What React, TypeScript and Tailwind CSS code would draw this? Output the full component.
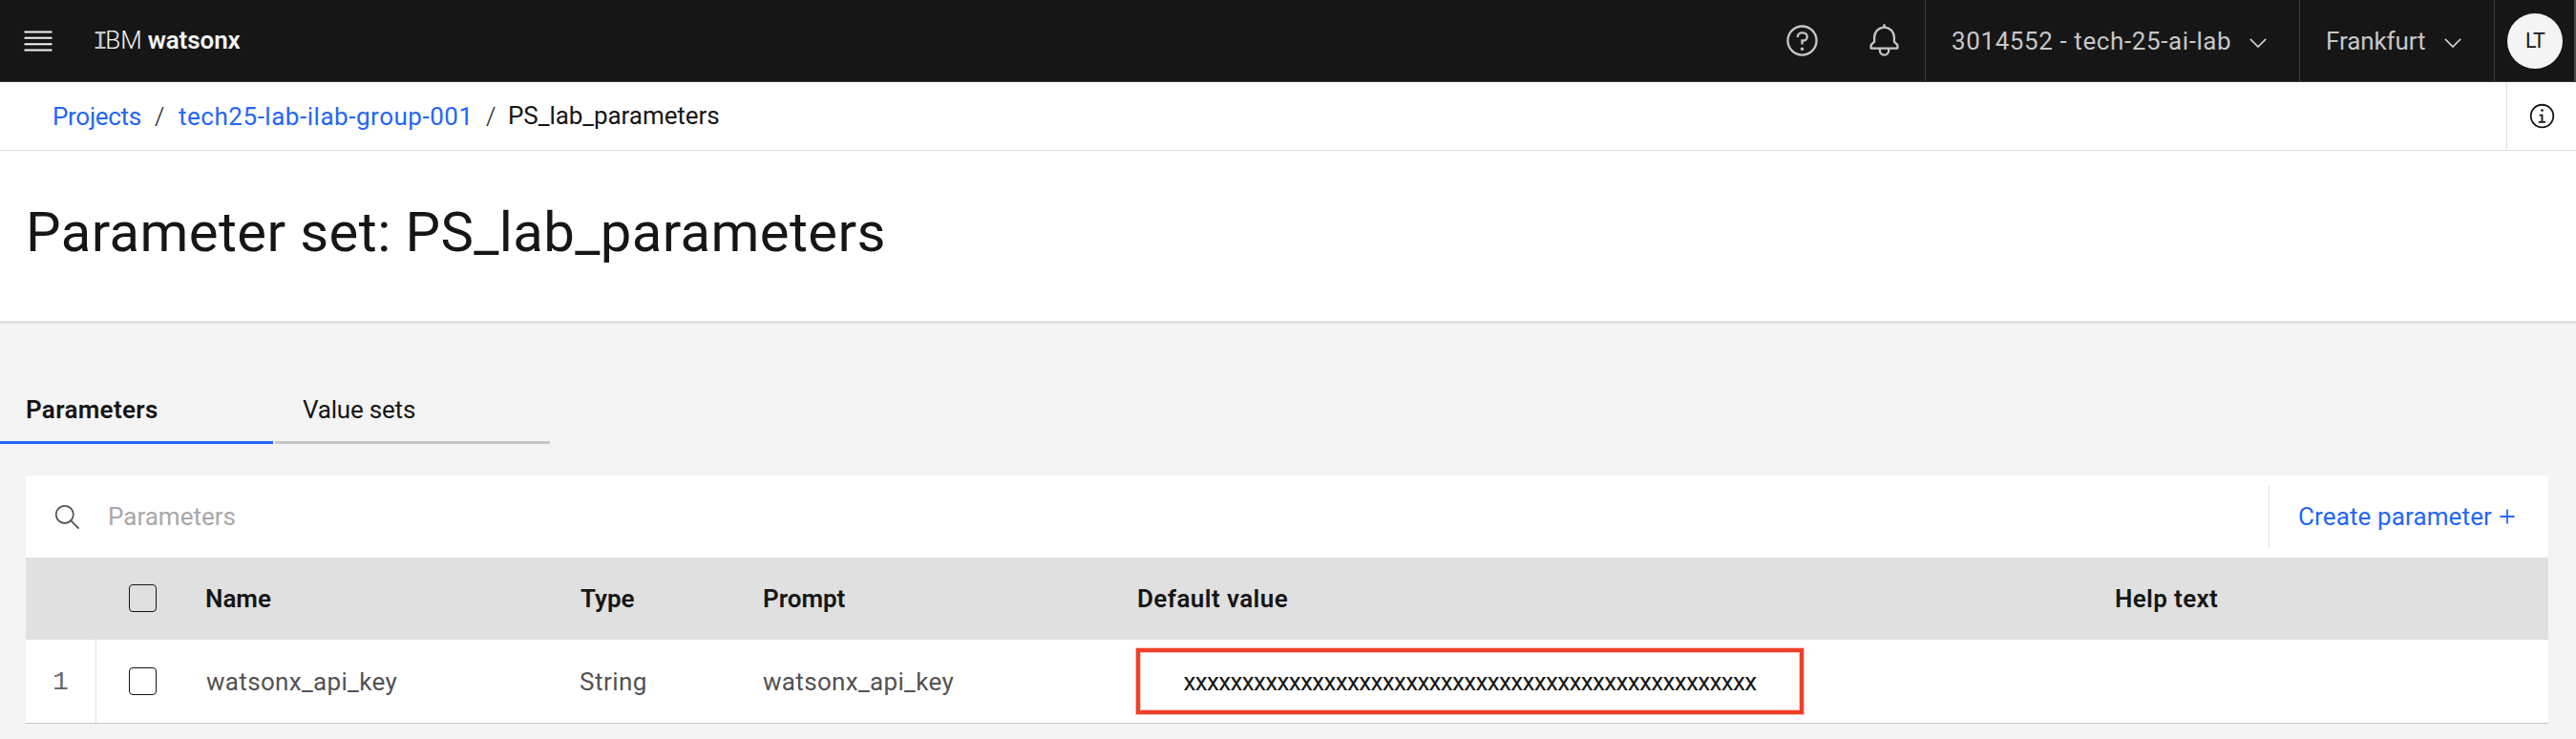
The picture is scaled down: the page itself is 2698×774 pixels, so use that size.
import type { ReactNode } from "react";

function MenuIcon() {
  return (
    <svg className="h-6 w-[30px] fill-[#f4f4f4]" viewBox="0 0 30 24">
      <path d="M0.5 1.4h29v2h-29zM0.5 7.8h29v2h-29zM0.5 14.2h29v2h-29zM0.5 20.6h29v2h-29z" />
    </svg>
  );
}

function HelpIcon() {
  return (
    <svg className="size-[37px] fill-[#c6c6c6]" viewBox="0 0 32 32">
      <path d="M16,2A14,14,0,1,0,30,16,14,14,0,0,0,16,2Zm0,26A12,12,0,1,1,28,16,12,12,0,0,1,16,28Z" />
      <circle cx="16" cy="23.5" r="1.5" />
      <path d="M17,8H15.5A4.49,4.49,0,0,0,11,12.49v.5h2v-.5A2.5,2.5,0,0,1,15.5,10H17a2.5,2.5,0,0,1,0,5H15v4.5h2V17a4.5,4.5,0,0,0,0-9Z" />
    </svg>
  );
}

function BellIcon() {
  return (
    <svg className="size-[37px] fill-[#c6c6c6]" viewBox="0 0 32 32">
      <path d="M28.71,19.29,26,16.59V13a10.01,10.01,0,0,0-9-9.95V1H15V3.05A10.01,10.01,0,0,0,6,13v3.59L3.29,19.29A1,1,0,0,0,3,20v3a1,1,0,0,0,1,1h7v.78a5.15,5.15,0,0,0,4.5,5.19A5,5,0,0,0,21,25V24h7a1,1,0,0,0,1-1V20A1,1,0,0,0,28.71,19.29ZM19,25a3,3,0,0,1-6,0V24h6Zm8-3H5V20.41L7.71,17.71A1,1,0,0,0,8,17V13a8,8,0,0,1,16,0v4a1,1,0,0,0,.29.71L27,20.41Z" />
    </svg>
  );
}

function ChevronIcon() {
  return (
    <svg className="mt-[5px] size-7 fill-[#c6c6c6]" viewBox="0 0 16 16">
      <path d="M8 11 3 6 3.7 5.3 8 9.6 12.3 5.3 13 6z" />
    </svg>
  );
}

function InfoIcon() {
  return (
    <svg className="size-[29px] fill-[#161616]" viewBox="0 0 32 32">
      <path d="M17 22V14H13v2h2v6H12v2h8V22ZM16 8a1.5 1.5 0 1 0 1.5 1.5A1.5 1.5 0 0 0 16 8Z" />
      <path d="M16,30A14,14,0,1,1,30,16,14,14,0,0,1,16,30ZM16,4A12,12,0,1,0,28,16,12,12,0,0,0,16,4Z" />
    </svg>
  );
}

function SearchIcon() {
  return (
    <svg className="size-[29px] fill-[#525252]" viewBox="0 0 16 16">
      <path d="M15,14.3L10.7,10c1.9-2.3,1.6-5.8-0.7-7.7S4.2,0.7,2.3,3S0.7,8.8,3,10.7c2,1.7,5,1.7,7,0l4.3,4.3L15,14.3z M2,6.5C2,4,4,2,6.5,2S11,4,11,6.5S9,11,6.5,11S2,9,2,6.5z" />
    </svg>
  );
}

function PlusIcon() {
  return (
    <svg className="size-4 fill-[#2466f6]" viewBox="0 0 16 16">
      <path d="M7.1 0.5h1.8v6.6h6.6v1.8H8.9v6.6H7.1V8.9H0.5V7.1h6.6z" />
    </svg>
  );
}

function Checkbox({ label }: { label: string }) {
  return (
    <button
      type="button"
      role="checkbox"
      aria-checked="false"
      aria-label={label}
      className="block h-[29px] w-[29px] rounded-[4px] border-[1.5px] border-[#161616]"
    />
  );
}

function TopBar() {
  return (
    <header className="flex h-[86px] items-stretch justify-between border-b border-[#393939] bg-[#161616] text-[#c6c6c6]">
      <div className="flex items-center pl-[25px] text-[#f4f4f4]">
        <MenuIcon />
        <div className="ml-[42px] flex items-baseline">
          <span className="font-['Liberation_Mono',monospace] text-[27px] text-[#c6c6c6]">I</span>
          <span className="-ml-[3px] font-light">BM</span>
          <span className="ml-[6px] font-semibold tracking-[-0.1px]">watsonx</span>
        </div>
      </div>
      <div className="flex items-stretch">
        <div className="flex w-[86px] items-center justify-center">
          <HelpIcon />
        </div>
        <div className="flex w-[86px] items-center justify-center">
          <BellIcon />
        </div>
        <div className="flex w-[392px] items-center justify-between border-l border-[#393939] pr-[29px] pl-[27px]">
          <span className="pt-px tracking-[0.6px]">3014552 - tech-25-ai-lab</span>
          <ChevronIcon />
        </div>
        <div className="flex w-[204px] items-center justify-between border-l border-[#393939] pr-[29px] pl-[27px]">
          <span className="pt-px tracking-[-0.1px]">Frankfurt</span>
          <ChevronIcon />
        </div>
        <div className="flex w-[86px] items-center border-r-2 border-l border-r-[#4a4a4a] border-l-[#393939] pl-[13px]">
          <div className="flex size-[58px] items-center justify-center rounded-full bg-[#f4f4f4] text-[21.5px] tracking-[-0.7px] text-[#161616]">
            LT
          </div>
        </div>
      </div>
    </header>
  );
}

function Breadcrumb() {
  return (
    <nav className="flex h-[72px] items-stretch justify-between border-b border-[#e0e0e0] bg-white">
      <div className="flex items-center pl-[55px]">
        <a className="w-[107px] tracking-[-0.3px] text-[#2466f6]">Projects</a>
        <span className="w-[25px] font-light text-[#161616]">/</span>
        <a className="w-[322px] tracking-[0.53px] text-[#2466f6]">tech25-lab-ilab-group-001</a>
        <span className="w-[23px] font-light text-[#161616]">/</span>
        <span className="pb-px tracking-[-0.06px] text-[#161616]">PS_lab_parameters</span>
      </div>
      <div className="flex w-[73px] items-center justify-center border-l border-[#e0e0e0]">
        <InfoIcon />
      </div>
    </nav>
  );
}

function Cell({ className, children }: { className: string; children?: ReactNode }) {
  return <div className={className}>{children}</div>;
}

const COLUMNS =
  "grid grid-cols-[74px_116px_391px_192px_391px_1024px_1fr] items-center";

export default function App() {
  return (
    <div className="h-[774px] overflow-hidden bg-[#f4f4f4] font-[Roboto,sans-serif] text-[26px] leading-[32px] whitespace-nowrap text-[#161616]">
      <TopBar />
      <Breadcrumb />
      <div className="flex h-[181px] items-center border-b-3 border-[#e0e0e0] bg-white pb-[9px] pl-[27px]">
        <h1 className="text-[58px] leading-[68px] tracking-[0.4px]">
          Parameter set: PS_lab_parameters
        </h1>
      </div>

      <div className="mt-[55px] flex h-[71px] gap-[2px]">
        <div className="w-[286px] border-b-3 border-[#2466f6] pt-[19px] pl-[27px] font-semibold tracking-[0.33px]">
          Parameters
        </div>
        <div className="w-[288px] border-b-3 border-[#c6c6c6] pt-[19px] pl-[29px] tracking-[-0.2px]">
          Value sets
        </div>
      </div>

      <main className="mt-[33px] mr-[29px] ml-[27px] border-b border-[#c6c6c6] bg-white">
        <div className="flex h-[86px] items-center justify-between">
          <div className="flex items-center gap-[28px] pl-[29px]">
            <SearchIcon />
            <span className="text-[#a8a8a8]">Parameters</span>
          </div>
          <div className="flex h-[65px] items-center gap-2 border-l border-[#e0e0e0] pr-[35px] pl-[30px] text-[#2466f6]">
            <span className="w-[203px] tracking-[0.12px]">Create parameter</span>
            <PlusIcon />
          </div>
        </div>
        <div className={`${COLUMNS} h-[86px] bg-[#e0e0e0] font-semibold`}>
          <Cell className="" />
          <Cell className="pb-px pl-[34px]">
            <Checkbox label="Select all" />
          </Cell>
          <Cell className="-ml-[2px]">Name</Cell>
          <Cell className="">Type</Cell>
          <Cell className="-ml-px">Prompt</Cell>
          <Cell className="tracking-[0.42px]">Default value</Cell>
          <Cell className="tracking-[0.36px]">Help text</Cell>
        </div>
        <div className={`${COLUMNS} h-[87px] text-[#525252]`}>
          <Cell className="flex h-full items-center border-r border-[#e0e0e0] pt-[3px] pl-[28px] font-['Liberation_Mono',monospace] text-[28px] text-[#6a6a6a]">
            1
          </Cell>
          <Cell className="pl-[34px]">
            <Checkbox label="Select row 1" />
          </Cell>
          <Cell className="-ml-px tracking-[0.33px]">watsonx_api_key</Cell>
          <Cell className="-ml-px tracking-[0.47px]">String</Cell>
          <Cell className="-ml-px tracking-[0.33px]">watsonx_api_key</Cell>
          <Cell className="ml-[-1px] flex h-[69px] w-[699px] items-center justify-center border-4 border-[#ee4027] tracking-[-0.65px] text-[#161616] shadow-[0_0_0_1px_rgba(238,64,39,0.3),inset_0_0_0_1px_rgba(238,64,39,0.3)]">
            xxxxxxxxxxxxxxxxxxxxxxxxxxxxxxxxxxxxxxxxxxxxxxxxx
          </Cell>
          <Cell className="" />
        </div>
      </main>
    </div>
  );
}
